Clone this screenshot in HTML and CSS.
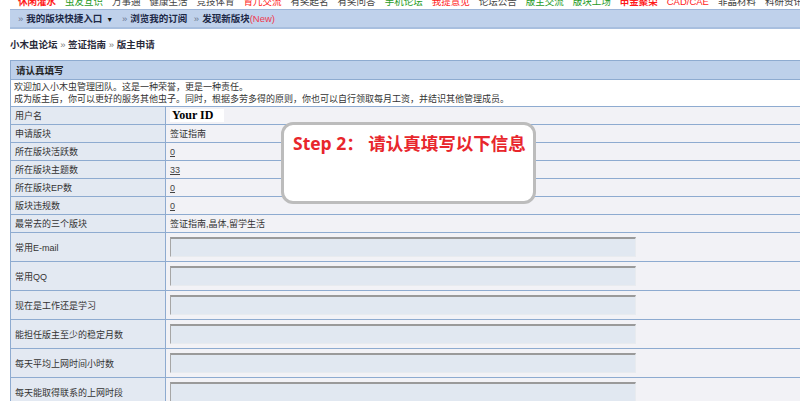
FILE: index.html
```html
<!DOCTYPE html>
<html lang="zh-CN">
<head>
  <meta charset="UTF-8">
  <title>版主申请 - 小木虫论坛</title>
  <link rel="stylesheet" href="styles.css">
</head>
<body>

  <!-- Top links -->
  <div class="toplinks">
    <a class="red b">休闲灌水</a>
    <a class="green">虫友互识</a>
    <a>万事通</a>
    <a>健康生活</a>
    <a>竞技体育</a>
    <a class="red">育儿交流</a>
    <a>有奖起名</a>
    <a>有奖问答</a>
    <a class="green">手机论坛</a>
    <a class="red">我提意见</a>
    <a>论坛公告</a>
    <a class="green">版主交流</a>
    <a class="green">版块工场</a>
    <a class="red b">申金聚荣</a>
    <a class="red">CAD/CAE</a>
    <a>非晶材料</a>
    <a>科研资讯</a>
    <a>核电技术</a>
  </div>

  <!-- Nav bar -->
  <div class="navbar">
    <span class="raquo">»</span><a>我的版块快捷入口</a><span class="arrow">▼</span>
    <span class="raquo">»</span><a>浏览我的订阅</a>
    <span class="raquo">»</span><a>发现新版块</a><span class="new">(New)</span>
  </div>

  <!-- Breadcrumb -->
  <div class="crumb">
    <a>小木虫论坛</a> <span class="raquo">»</span> <a>签证指南</a> <span class="raquo">»</span> <a>版主申请</a>
  </div>

  <div class="main">
    <table class="form">
      <tr>
        <th colspan="2">请认真填写</th>
      </tr>
      <tr>
        <td colspan="2" class="intro">
          欢迎加入小木虫管理团队。这是一种荣誉，更是一种责任。<br>
          成为版主后，你可以更好的服务其他虫子。同时，根据多劳多得的原则，你也可以自行领取每月工资，并结识其他管理成员。
        </td>
      </tr>
      <tr class="info">
        <td class="label">用户名</td>
        <td class="value"><span class="yourid">Your ID</span></td>
      </tr>
      <tr class="info">
        <td class="label">申请版块</td>
        <td class="value">签证指南</td>
      </tr>
      <tr class="info">
        <td class="label">所在版块活跃数</td>
        <td class="value"><a class="num">0</a></td>
      </tr>
      <tr class="info">
        <td class="label">所在版块主题数</td>
        <td class="value"><a class="num">33</a></td>
      </tr>
      <tr class="info">
        <td class="label">所在版块EP数</td>
        <td class="value"><a class="num">0</a></td>
      </tr>
      <tr class="info">
        <td class="label">版块违规数</td>
        <td class="value"><a class="num">0</a></td>
      </tr>
      <tr class="info">
        <td class="label">最常去的三个版块</td>
        <td class="value">签证指南,晶体,留学生活</td>
      </tr>
      <tr class="field">
        <td class="label">常用E-mail</td>
        <td class="value"><input type="text" class="txt"></td>
      </tr>
      <tr class="field">
        <td class="label">常用QQ</td>
        <td class="value"><input type="text" class="txt"></td>
      </tr>
      <tr class="field">
        <td class="label">现在是工作还是学习</td>
        <td class="value"><input type="text" class="txt"></td>
      </tr>
      <tr class="field">
        <td class="label">能担任版主至少的稳定月数</td>
        <td class="value"><input type="text" class="txt"></td>
      </tr>
      <tr class="field">
        <td class="label">每天平均上网时间小时数</td>
        <td class="value"><input type="text" class="txt"></td>
      </tr>
      <tr class="field">
        <td class="label">每天能取得联系的上网时段</td>
        <td class="value"><input type="text" class="txt"></td>
      </tr>
    </table>

    <!-- Step callout -->
    <div class="callout">Step 2： 请认真填写以下信息</div>
  </div>

</body>
</html>
```

FILE: styles.css
```css
html, body {
  overflow: hidden;
}

body {
  margin: 0;
  font-family: "Liberation Sans", "Noto Sans CJK SC", sans-serif;
  font-size: 9px;
  color: #333;
  background-color: #fff;
}

a {
  color: inherit;
  text-decoration: none;
}

/* Top links */
.toplinks {
  height: 9px;
  line-height: 9px;
  margin-top: -3px;
  padding-left: 18px;
  font-size: 9.5px;
  white-space: nowrap;
  display: flex;
  gap: 9px;
}

.toplinks a {
  color: #444;
}

.toplinks .red {
  color: #ff1a1a;
}

.toplinks .green {
  color: #1e9a1e;
}

.toplinks .b {
  font-weight: bold;
}

/* Nav bar */
.navbar {
  margin-left: 10px;
  margin-top: 3px;
  height: 17px;
  line-height: 17px;
  background-color: #bfd1eb;
  border-top: 1px solid #9db5d8;
  border-bottom: 2px solid #a8bfdf;
  padding-left: 8px;
  font-size: 9.5px;
  font-weight: bold;
  color: #1c2846;
  white-space: nowrap;
}

.navbar .raquo {
  color: #6b7890;
  font-weight: normal;
  margin-right: 3px;
}

.navbar a {
  margin-right: 4px;
}

.navbar .arrow {
  font-size: 7px;
  color: #111;
  margin-right: 6px;
}

.navbar .new {
  color: #f0394f;
  font-weight: normal;
  margin-left: -4px;
}

/* Breadcrumb */
.crumb {
  margin-left: 10px;
  height: 31px;
  line-height: 31px;
  font-size: 9.5px;
  font-weight: bold;
  color: #2a2a3a;
}

.crumb .raquo {
  color: #777;
  font-weight: normal;
}

/* Form table */
.main {
  position: relative;
  margin-left: 10px;
}

.form {
  width: 820px;
  border-collapse: collapse;
  border: 1px solid #8eabd0;
}

.form th {
  height: 18px;
  padding: 0 5px;
  text-align: left;
  font-size: 9.5px;
  font-weight: bold;
  color: #222;
  background-color: #bdd0ea;
  border-bottom: 1px solid #8eabd0;
}

.form td {
  padding: 0 4px;
  border-top: 1px solid #8eabd0;
  border-bottom: 1px solid #8eabd0;
}

.form .intro {
  background-color: #fff;
  height: 26px;
  line-height: 12px;
  padding: 0 3px;
  color: #333;
}

.form .label {
  width: 146px;
  background-color: #e3e9f2;
  border-right: 1px solid #8eabd0;
  color: #333;
}

.form .value {
  background-color: #f2f2f6;
}

.form .info td {
  height: 17px;
}

.form .field td {
  height: 28px;
}

.yourid {
  display: inline-block;
  width: 52px;
  background-color: #fff;
  font-family: "Liberation Serif", serif;
  font-size: 12px;
  font-weight: bold;
  color: #000;
  line-height: 13px;
  padding-left: 2px;
}

.num {
  text-decoration: underline;
  color: #444;
}

.txt {
  display: block;
  box-sizing: border-box;
  width: 466px;
  height: 20px;
  margin: 0;
  padding: 0;
  background-color: #e1e8f1;
  border-top: 2px solid #9a9a9a;
  border-left: 1px solid #a6a6a6;
  border-right: 1px solid #e8ebef;
  border-bottom: 1px solid #e8ebef;
}

/* Step callout */
.callout {
  position: absolute;
  left: 271px;
  top: 62px;
  width: 240px;
  height: 69px;
  padding: 7px 0 0 9px;
  background-color: #fff;
  border: 3px solid #bcbcbc;
  border-radius: 12px;
  font-family: "Open Sans", "Noto Sans CJK SC", sans-serif;
  font-size: 17.5px;
  font-weight: bold;
  color: #e8262c;
  line-height: 22px;
  white-space: nowrap;
}
```
